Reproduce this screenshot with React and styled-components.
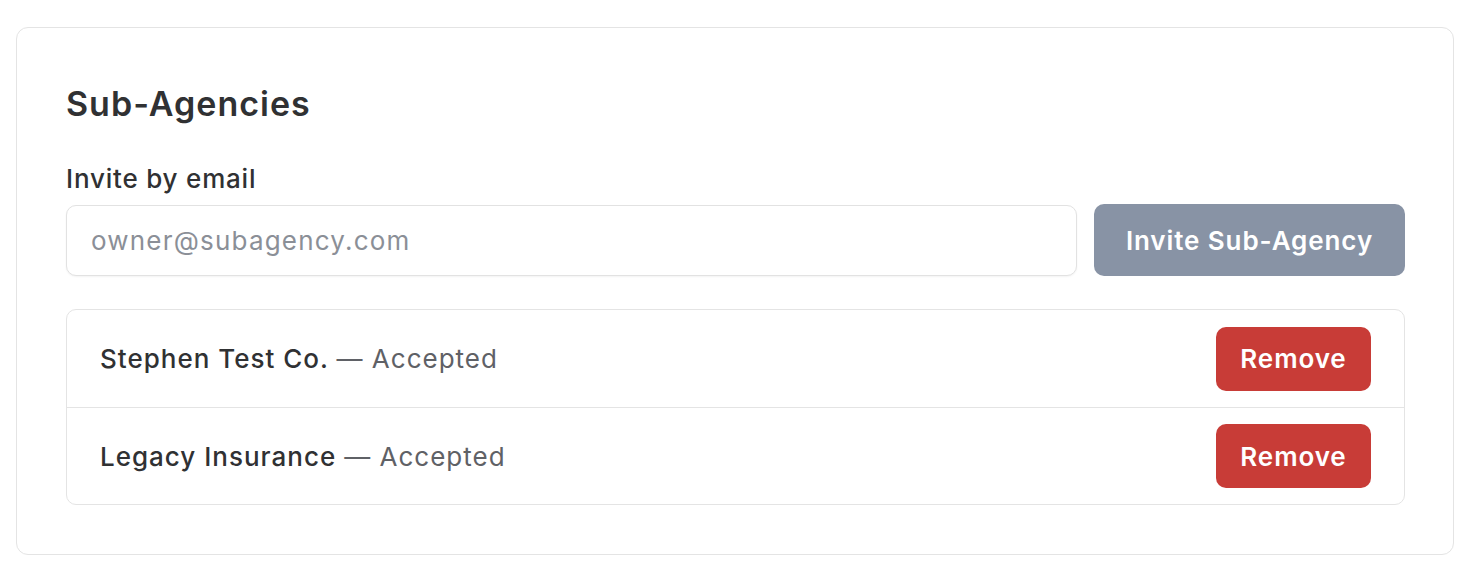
import React from 'react';
import styled, { createGlobalStyle } from 'styled-components';

const GlobalStyle = createGlobalStyle`
  html, body {
    margin: 0;
    padding: 0;
    background: #ffffff;
  }
  body {
    font-family: Inter, "Noto Sans", sans-serif;
    letter-spacing: 1px;
    color: #303133;
  }
  * {
    box-sizing: border-box;
  }
`;

const Page = styled.div`
  padding: 27px 20px 28px 16px;
`;

const Card = styled.section`
  border: 1px solid #e4e4e4;
  border-radius: 12px;
  padding: 48px 48px 49px 49px;
  background: #ffffff;
`;

const Title = styled.h2`
  margin: 8px 0 0;
  font-size: 34px;
  font-weight: 600;
  line-height: 40px;
  letter-spacing: 1px;
  color: #303133;
`;

const Label = styled.label`
  display: block;
  margin-top: 38px;
  font-size: 26px;
  font-weight: 500;
  line-height: 34px;
  letter-spacing: 0.8px;
  color: #303133;
`;

const InviteRow = styled.div`
  display: flex;
  gap: 17px;
  margin-top: 8px;
`;

const EmailInput = styled.input`
  flex: 1;
  height: 71px;
  margin-top: 1px;
  padding: 0 24px;
  border: 1px solid #e2e2e2;
  border-radius: 10px;
  font-family: inherit;
  font-size: 26px;
  letter-spacing: 1.2px;
  color: #303133;
  background: #ffffff;
  box-shadow: 0 1px 2px rgba(0, 0, 0, 0.05);
  outline: none;

  &::placeholder {
    color: #8b8f97;
  }
`;

const Button = styled.button`
  border: none;
  border-radius: 10px;
  background: ${p => p.$bg};
  color: #ffffff;
  font-family: inherit;
  font-size: 26px;
  font-weight: 600;
  letter-spacing: 0.9px;
  height: ${p => p.$h}px;
  width: ${p => p.$w}px;
  padding: 0;
  cursor: pointer;
`;

const List = styled.ul`
  list-style: none;
  margin: 33px 0 0;
  padding: 0;
  border: 1px solid #e4e4e4;
  border-radius: 10px;
`;

const Row = styled.li`
  display: flex;
  align-items: center;
  justify-content: space-between;
  padding: 16px 33px 16px 33px;
  height: 97px;

  & + & {
    border-top: 1px solid #e4e4e4;
  }
`;

const RowText = styled.div`
  font-size: 26px;
  font-weight: 500;
  color: #303133;
`;

const Status = styled.span`
  font-weight: 400;
  color: #5f6166;
`;

const agencies = [
  { name: 'Stephen Test Co.', status: 'Accepted' },
  { name: 'Legacy Insurance', status: 'Accepted' },
];

const App = () => (
  <>
    <GlobalStyle />
    <Page>
      <Card>
        <Title>Sub-Agencies</Title>
        <Label htmlFor="invite-email">Invite by email</Label>
        <InviteRow>
          <EmailInput id="invite-email" type="email" placeholder="owner@subagency.com" />
          <Button $bg="#8893a5" $w={311} $h={72}>Invite Sub-Agency</Button>
        </InviteRow>
        <List>
          {agencies.map(a => (
            <Row key={a.name}>
              <RowText>
                {a.name} <Status>— {a.status}</Status>
              </RowText>
              <Button $bg="#c83c37" $w={155} $h={64}>Remove</Button>
            </Row>
          ))}
        </List>
      </Card>
    </Page>
  </>
);

export default App;
